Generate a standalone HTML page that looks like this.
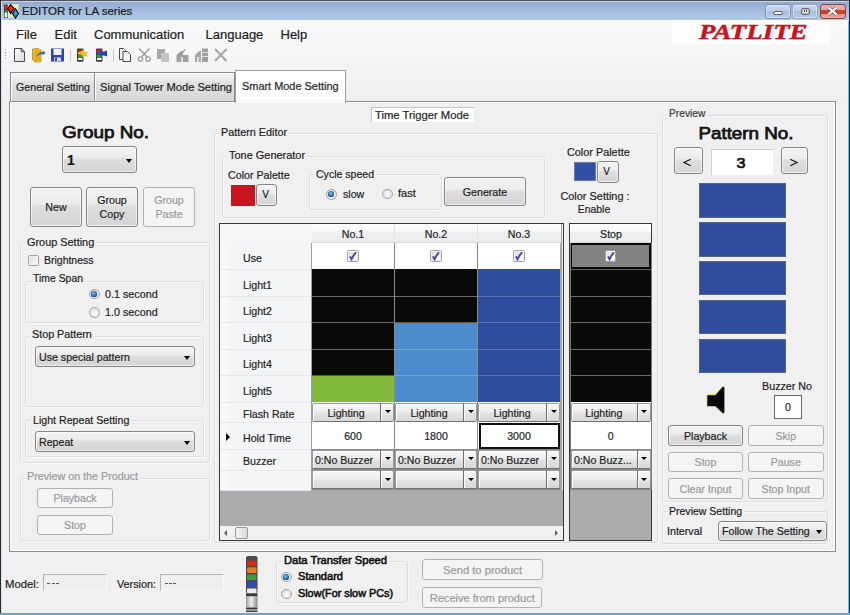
<!DOCTYPE html>
<html><head><meta charset="utf-8"><style>
html,body{margin:0;padding:0;}
body{width:850px;height:615px;overflow:hidden;position:relative;font-family:"Liberation Sans", sans-serif;background:#f0f0f0;}
body>div,body>svg{position:absolute;}
body>div{-webkit-text-stroke:0.2px currentColor;}
</style></head><body>
<div style="left:0px;top:0px;width:850px;height:615px;background:#f0f0f0;"></div>
<div style="left:0px;top:0px;width:850px;height:20px;background:linear-gradient(#8ea6cb,#a6bfdf 60%,#b0c9e8);"></div>
<div style="left:0px;top:0px;width:850px;height:1px;background:#4a5260;"></div>
<div style="left:0px;top:0px;width:1px;height:615px;background:#2a2a2a;"></div>
<div style="left:1px;top:1px;width:1px;height:614px;background:#d6e2ee;"></div>
<div style="left:1px;top:1px;width:848px;height:1px;background:#c8d6e8;"></div>
<div style="left:849px;top:0px;width:1px;height:615px;background:#1b2a4e;"></div>
<div style="left:848px;top:21px;width:1px;height:594px;background:#5cc3ea;"></div>
<div style="left:0px;top:613px;width:850px;height:2px;background:#3db6df;"></div>
<svg style="left:4px;top:4px" width="15" height="15" viewBox="0 0 15 15"><defs><linearGradient id="ibg" x1="0" y1="0" x2="1" y2="1"><stop offset="0" stop-color="#b8d8a8"/><stop offset="0.5" stop-color="#e8f0c8"/><stop offset="1" stop-color="#a8d8c8"/></linearGradient></defs><rect x="0" y="0" width="14.5" height="14" fill="url(#ibg)"/><rect x="0" y="0.5" width="3.8" height="13.5" fill="#3a3a3a"/><rect x="0.6" y="1.5" width="2.6" height="3.5" fill="#e82818"/><rect x="0.6" y="5.8" width="2.6" height="1.8" fill="#18a040"/><rect x="0.6" y="8.2" width="2.6" height="5.2" rx="1" fill="#f4f4f4"/><path d="M6.6 0.5 L10 4.5 L6.6 9.5 L3.8 4.5 Z" fill="#f02818" stroke="#000" stroke-width="1.1"/><path d="M11.5 4.8 L14.5 9.5 L11.5 14 L8.5 9.5 Z" fill="#2898e8" stroke="#000" stroke-width="1.1"/></svg>
<div style="left:22px;top:5.77px;font-size:11.5px;line-height:11.5px;font-weight:400;color:#1a1a1a;white-space:nowrap;">EDITOR for LA series</div>
<div style="left:765px;top:4px;width:26px;height:14.5px;border:1px solid #7c8fae;border-radius:3px;box-sizing:border-box;background:linear-gradient(#c9d8ec,#bccde6 45%,#a9bedc 50%,#b6cbe6);box-shadow:inset 0 0 0 1px rgba(255,255,255,0.45);"></div>
<div style="left:773px;top:11px;width:9.5px;height:4px;background:#f8f8f8;border:1px solid #5c6470;border-radius:2px;box-sizing:border-box;"></div>
<div style="left:792px;top:4px;width:26px;height:14.5px;border:1px solid #7c8fae;border-radius:3px;box-sizing:border-box;background:linear-gradient(#c9d8ec,#bccde6 45%,#a9bedc 50%,#b6cbe6);box-shadow:inset 0 0 0 1px rgba(255,255,255,0.45);border-color:#96a8c4;"></div>
<div style="left:801px;top:7.5px;width:9px;height:7.5px;background:#e8e8e8;border:1px solid #6a6a6a;border-radius:2px;box-sizing:border-box;box-shadow:inset 0 0 0 1px #b8b8b8;"></div>
<div style="left:803.5px;top:10px;width:1.2px;height:1.5px;background:#444;"></div>
<div style="left:806px;top:10px;width:1.2px;height:1.5px;background:#444;"></div>
<div style="left:820px;top:4px;width:26px;height:14.5px;border:1px solid #7e4a48;border-radius:3px;box-sizing:border-box;background:linear-gradient(#f2b2b0,#eda09c 40%,#c8482a 42%,#c44420 68%,#e89088 72%,#f0a8a4);"></div>
<svg style="left:826px;top:6px" width="13" height="10" viewBox="0 0 13 10"><path d="M2.5 1.5 L10.5 8.5 M10.5 1.5 L2.5 8.5" stroke="#6a5a5a" stroke-width="3.4"/><path d="M2.5 1.5 L10.5 8.5 M10.5 1.5 L2.5 8.5" stroke="#fff" stroke-width="2.2"/></svg>
<div style="left:2px;top:20px;width:846px;height:24px;background:linear-gradient(#fafafa,#f6f6f6);"></div>
<div style="left:16px;top:27.80px;font-size:13px;line-height:13px;font-weight:400;color:#1e1e1e;white-space:nowrap;">File</div>
<div style="left:54.5px;top:27.80px;font-size:13px;line-height:13px;font-weight:400;color:#1e1e1e;white-space:nowrap;">Edit</div>
<div style="left:94px;top:27.80px;font-size:13px;line-height:13px;font-weight:400;color:#1e1e1e;white-space:nowrap;">Communication</div>
<div style="left:205.5px;top:27.80px;font-size:13px;line-height:13px;font-weight:400;color:#1e1e1e;white-space:nowrap;">Language</div>
<div style="left:280.5px;top:27.80px;font-size:13px;line-height:13px;font-weight:400;color:#1e1e1e;white-space:nowrap;">Help</div>
<div style="left:672px;top:20px;width:158px;height:24px;background:#fdfdfd;"></div>
<div style="left:698.8px;top:22.00px;font-size:21.5px;line-height:21.5px;font-weight:700;color:#c8141e;white-space:nowrap;font-style:italic;-webkit-text-stroke:0.5px #c8141e;font-family:'Liberation Serif', serif;transform:scaleX(1.2500);transform-origin:left 0;">PATLITE</div>
<div style="left:2px;top:44px;width:846px;height:58px;background:linear-gradient(#f8f8f8,#f3f3f3 40%,#eeeeee);"></div>
<div style="left:5px;top:49px;width:1px;height:1px;background:#9a9a9a;"></div>
<div style="left:5px;top:52px;width:1px;height:1px;background:#9a9a9a;"></div>
<div style="left:5px;top:55px;width:1px;height:1px;background:#9a9a9a;"></div>
<div style="left:5px;top:58px;width:1px;height:1px;background:#9a9a9a;"></div>
<svg style="left:0;top:44px" width="240" height="22" viewBox="0 44 240 22"><path d="M14.5 48.5 H21.2 L24.5 51.8 V61.5 H14.5 Z" fill="url(#gpage)" stroke="#4a4a4a" stroke-width="1"/><path d="M21.2 48.5 V51.8 H24.5 Z" fill="#d0d0d0" stroke="#4a4a4a" stroke-width="0.9"/><path d="M32.5 49 L38 48.5 L41 50 V61.5 L35 62 L32.5 60 Z" fill="#f0c030" stroke="#b08a20" stroke-width="0.8"/><path d="M34.5 50 L40 51 V60 L34.5 61 Z" fill="#e2a820"/><path d="M37 56.5 Q38.5 51.5 43 52 L42.5 50 L45.5 53 L42.5 55.5 L42.8 53.8 Q39.5 53.5 37 56.5 Z" fill="#3a5ab8"/><rect x="51" y="48.5" width="13" height="13" fill="#3344aa"/><rect x="53.5" y="49" width="8" height="6" fill="#f2f2f2"/><rect x="54" y="57.5" width="7" height="3.5" fill="#dde"/><rect x="55" y="58" width="2" height="3" fill="#3344aa"/><rect x="70" y="49.5" width="1" height="12" fill="#c8c8c8"/><rect x="77" y="48.5" width="6.5" height="13.2" rx="1" fill="#404040"/><rect x="78" y="50" width="4.5" height="2" fill="#e02020"/><rect x="78" y="52" width="4.5" height="2.5" fill="#e8c020"/><rect x="78" y="54.5" width="4.5" height="3" fill="#30a030"/><rect x="78" y="58" width="4.5" height="2" fill="#f0f0f0"/><path d="M80 52 L83 50 L85 52 L88 51.5 L86.5 54.5 L88 57 L85 56 L83 58 L82 55 L79.5 54 Z" fill="#f2c21a"/><rect x="96" y="48.5" width="6.5" height="13.2" rx="1" fill="#404040"/><rect x="97" y="50" width="4.5" height="2" fill="#e02020"/><rect x="97" y="52" width="4.5" height="2.5" fill="#3050c0"/><rect x="97" y="54.5" width="4.5" height="3" fill="#30a030"/><rect x="97" y="58" width="4.5" height="2" fill="#f0f0f0"/><path d="M99.5 51.5 H104 L107 50.5 V56.5 L104 55.5 H99.5 Z" fill="#2040c0"/><rect x="113" y="49.5" width="1" height="12" fill="#c8c8c8"/><path d="M119.5 48.5 H123.5 L125.5 50.5 V59.5 H119.5 Z" fill="#f4f4f4" stroke="#4a4a4a" stroke-width="1"/><path d="M123 51.5 H127.5 L130.5 54.5 V61.5 H123 Z" fill="#f4f4f4" stroke="#4a4a4a" stroke-width="1"/><path d="M139 48.5 L147 57 M149.5 48.5 L141.5 57" stroke="#a0a0a0" stroke-width="1.6"/><circle cx="140.5" cy="59" r="2.2" fill="none" stroke="#a0a0a0" stroke-width="1.3"/><circle cx="148" cy="59" r="2.2" fill="none" stroke="#a0a0a0" stroke-width="1.3"/><rect x="157" y="49" width="8" height="10" fill="#a8a8a8"/><rect x="161" y="53" width="8" height="9" fill="#c4c4c4"/><path d="M176.5 55 L181 51 L183.5 51 L183.5 49.5 L186 49.5 L183 53 V62 H176.5 Z" fill="#a0a0a0"/><rect x="183" y="55" width="5.5" height="7" fill="#a0a0a0"/><rect x="181" y="57" width="2" height="5" fill="#e0e0e0"/><path d="M195 55 L199 51 H201 V62 H195 Z" fill="#a8a8a8"/><rect x="202" y="48.5" width="6" height="13.5" fill="#a0a0a0"/><rect x="202" y="52" width="6" height="1" fill="#e0e0e0"/><rect x="202" y="56" width="6" height="1" fill="#e0e0e0"/><rect x="197" y="57" width="2" height="5" fill="#e0e0e0"/><path d="M215 49 L226.5 61 M226.5 49 L215 61" stroke="#a8a8a8" stroke-width="2.2"/><defs><linearGradient id="gpage" x1="0" y1="0" x2="1" y2="1"><stop offset="0" stop-color="#fff"/><stop offset="1" stop-color="#d8d8d8"/></linearGradient></defs></svg>
<div style="left:10px;top:72px;width:85px;height:30px;border:1px solid #8a8a8a;border-bottom:none;box-sizing:border-box;background:linear-gradient(#f2f2f2 0%,#ebebeb 26%,#e2e2e2 28%,#d8d8d8 100%);box-shadow:inset 1px 1px 0 #fff;"></div>
<div style="left:15.8px;top:82.49px;font-size:11px;line-height:11px;font-weight:400;color:#1e1e1e;white-space:nowrap;transform:scaleX(0.9682);transform-origin:left 0;">General Setting</div>
<div style="left:94px;top:72px;width:141px;height:30px;border:1px solid #8a8a8a;border-bottom:none;box-sizing:border-box;background:linear-gradient(#f2f2f2 0%,#ebebeb 26%,#e2e2e2 28%,#d8d8d8 100%);box-shadow:inset 1px 1px 0 #fff;"></div>
<div style="left:99.5px;top:82.49px;font-size:11px;line-height:11px;font-weight:400;color:#1e1e1e;white-space:nowrap;transform:scaleX(1.0104);transform-origin:left 0;">Signal Tower Mode Setting</div>
<div style="left:9px;top:101px;width:827px;height:451px;border:1px solid #898c95;box-sizing:border-box;background:#f0f0f0;box-shadow:inset 1px 1px 0 #fff, inset -1px -1px 0 #fff;"></div>
<div style="left:235px;top:70px;width:111px;height:33px;border:1px solid #9a9ca2;border-bottom:none;box-sizing:border-box;background:#fff;"></div>
<div style="left:236px;top:100px;width:109px;height:2.5px;background:#fbfbfb;"></div>
<div style="left:241.8px;top:80.89px;font-size:11px;line-height:11px;font-weight:400;color:#1e1e1e;white-space:nowrap;transform:scaleX(0.9937);transform-origin:left 0;">Smart Mode Setting</div>
<div style="left:62px;top:124.55px;font-size:16.6px;line-height:16.6px;font-weight:400;color:#141414;white-space:nowrap;-webkit-text-stroke:0.75px #141414;transform:scaleX(1.1360);transform-origin:left 0;">Group No.</div>
<div style="left:62px;top:146px;width:75px;height:27px;border:1px solid #858585;border-radius:3px;background:linear-gradient(#f3f3f3 0%,#ececec 42%,#dedede 48%,#d4d4d4 100%);box-sizing:border-box;box-shadow:inset 0 0 0 1px rgba(255,255,255,0.6);"></div>
<div style="left:66px;top:154.81px;font-size:11px;line-height:11px;font-weight:400;color:#1e1e1e;white-space:nowrap;transform:scaleX(0.9650);transform-origin:left 0;"></div>
<div style="left:126px;top:158.5px;width:0;height:0;border-left:3.5px solid transparent;border-right:3.5px solid transparent;border-top:4px solid #000;"></div>
<div style="left:67px;top:153.15px;font-size:14px;line-height:14px;font-weight:700;color:#141414;white-space:nowrap;">1</div>
<div style="left:29.7px;top:187px;width:52px;height:40px;border:1px solid #858585;border-radius:3px;background:linear-gradient(#f3f3f3 0%,#ececec 42%,#dedede 48%,#d4d4d4 100%);box-sizing:border-box;box-shadow:inset 0 0 0 1px rgba(255,255,255,0.6);"></div>
<div style="left:29.70px;width:52px;text-align:center;top:202.31px;font-size:11px;line-height:11px;font-weight:400;color:#1e1e1e;white-space:nowrap;transform:scaleX(0.9650);transform-origin:center 0;">New</div>
<div style="left:86px;top:187px;width:52px;height:40px;border:1px solid #858585;border-radius:3px;background:linear-gradient(#f3f3f3 0%,#ececec 42%,#dedede 48%,#d4d4d4 100%);box-sizing:border-box;box-shadow:inset 0 0 0 1px rgba(255,255,255,0.6);"></div>
<div style="left:86.00px;width:52px;text-align:center;top:195.19px;font-size:11px;line-height:11px;font-weight:400;color:#1e1e1e;white-space:nowrap;transform:scaleX(0.9650);transform-origin:center 0;">Group</div>
<div style="left:86.00px;width:52px;text-align:center;top:209.19px;font-size:11px;line-height:11px;font-weight:400;color:#1e1e1e;white-space:nowrap;transform:scaleX(0.9650);transform-origin:center 0;">Copy</div>
<div style="left:143px;top:187px;width:52px;height:40px;border:1px solid #adb2b5;border-radius:3px;background:#f4f4f4;box-sizing:border-box;"></div>
<div style="left:143.00px;width:52px;text-align:center;top:195.19px;font-size:11px;line-height:11px;font-weight:400;color:#9a9a9a;white-space:nowrap;transform:scaleX(0.9650);transform-origin:center 0;">Group</div>
<div style="left:143.00px;width:52px;text-align:center;top:209.19px;font-size:11px;line-height:11px;font-weight:400;color:#9a9a9a;white-space:nowrap;transform:scaleX(0.9650);transform-origin:center 0;">Paste</div>
<div style="left:20px;top:242px;width:190px;height:221px;border:1px solid #dcdcdc;border-radius:3px;box-sizing:border-box;box-shadow:inset 1px 1px 0 #fafafa, 1px 1px 0 #fafafa;"></div>
<div style="left:25px;top:240px;width:71.2px;height:5px;background:#f0f0f0;"></div>
<div style="left:27px;top:236.69px;font-size:11px;line-height:11px;font-weight:400;color:#1e1e1e;white-space:nowrap;transform:scaleX(0.9901);transform-origin:left 0;">Group Setting</div>
<div style="left:27.8px;top:255.2px;width:11.3px;height:11.3px;border:1px solid #a2a2a2;border-radius:1.5px;box-sizing:border-box;background:linear-gradient(135deg,#d6d6d6,#f6f6f6 70%,#fcfcfc);box-shadow:inset 0 0 0 1px #f0f0f0;"></div>
<div style="left:44px;top:255.29px;font-size:11px;line-height:11px;font-weight:400;color:#1e1e1e;white-space:nowrap;transform:scaleX(0.9525);transform-origin:left 0;">Brightness</div>
<div style="left:25px;top:281px;width:179px;height:42px;border:1px solid #dcdcdc;border-radius:3px;box-sizing:border-box;box-shadow:inset 1px 1px 0 #fafafa, 1px 1px 0 #fafafa;"></div>
<div style="left:30.700000000000003px;top:279px;width:54px;height:5px;background:#f0f0f0;"></div>
<div style="left:32.7px;top:273.29px;font-size:11px;line-height:11px;font-weight:400;color:#1e1e1e;white-space:nowrap;transform:scaleX(0.9473);transform-origin:left 0;">Time Span</div>
<div style="left:89px;top:288.6px;width:10.5px;height:10.5px;border-radius:50%;border:1px solid #a4a4a4;box-sizing:border-box;background:radial-gradient(circle at 55% 60%, #fcfcfc, #d8d8d8 90%);"></div>
<div style="left:91.4px;top:291.0px;width:5.7px;height:5.7px;border-radius:50%;background:radial-gradient(circle at 45% 40%, #9fd4f4 0%, #3a86c4 35%, #123e78 85%);"></div>
<div style="left:105px;top:288.69px;font-size:11px;line-height:11px;font-weight:400;color:#1e1e1e;white-space:nowrap;transform:scaleX(0.9793);transform-origin:left 0;">0.1 second</div>
<div style="left:89px;top:307px;width:10.5px;height:10.5px;border-radius:50%;border:1px solid #a4a4a4;box-sizing:border-box;background:radial-gradient(circle at 55% 60%, #fcfcfc, #d8d8d8 90%);"></div>
<div style="left:105px;top:306.69px;font-size:11px;line-height:11px;font-weight:400;color:#1e1e1e;white-space:nowrap;transform:scaleX(0.9793);transform-origin:left 0;">1.0 second</div>
<div style="left:24.5px;top:336px;width:179.5px;height:70.5px;border:1px solid #dcdcdc;border-radius:3px;box-sizing:border-box;box-shadow:inset 1px 1px 0 #fafafa, 1px 1px 0 #fafafa;"></div>
<div style="left:30.200000000000003px;top:334px;width:63.8px;height:5px;background:#f0f0f0;"></div>
<div style="left:32.2px;top:329.39px;font-size:11px;line-height:11px;font-weight:400;color:#1e1e1e;white-space:nowrap;transform:scaleX(0.9779);transform-origin:left 0;">Stop Pattern</div>
<div style="left:35px;top:346px;width:160px;height:21px;border:1px solid #858585;border-radius:3px;background:linear-gradient(#f3f3f3 0%,#ececec 42%,#dedede 48%,#d4d4d4 100%);box-sizing:border-box;box-shadow:inset 0 0 0 1px rgba(255,255,255,0.6);"></div>
<div style="left:39px;top:351.81px;font-size:11px;line-height:11px;font-weight:400;color:#1e1e1e;white-space:nowrap;transform:scaleX(0.9650);transform-origin:left 0;">Use special pattern</div>
<div style="left:184px;top:355.5px;width:0;height:0;border-left:3.5px solid transparent;border-right:3.5px solid transparent;border-top:4px solid #000;"></div>
<div style="left:25px;top:420px;width:179px;height:37px;border:1px solid #dcdcdc;border-radius:3px;box-sizing:border-box;box-shadow:inset 1px 1px 0 #fafafa, 1px 1px 0 #fafafa;"></div>
<div style="left:30.9px;top:418px;width:100.3px;height:5px;background:#f0f0f0;"></div>
<div style="left:32.9px;top:414.69px;font-size:11px;line-height:11px;font-weight:400;color:#1e1e1e;white-space:nowrap;transform:scaleX(0.9661);transform-origin:left 0;">Light Repeat Setting</div>
<div style="left:35px;top:431px;width:160px;height:21px;border:1px solid #858585;border-radius:3px;background:linear-gradient(#f3f3f3 0%,#ececec 42%,#dedede 48%,#d4d4d4 100%);box-sizing:border-box;box-shadow:inset 0 0 0 1px rgba(255,255,255,0.6);"></div>
<div style="left:39px;top:436.81px;font-size:11px;line-height:11px;font-weight:400;color:#1e1e1e;white-space:nowrap;transform:scaleX(0.9650);transform-origin:left 0;">Repeat</div>
<div style="left:184px;top:440.5px;width:0;height:0;border-left:3.5px solid transparent;border-right:3.5px solid transparent;border-top:4px solid #000;"></div>
<div style="left:20px;top:478px;width:190px;height:63px;border:1px solid #dcdcdc;border-radius:3px;box-sizing:border-box;box-shadow:inset 1px 1px 0 #fafafa, 1px 1px 0 #fafafa;"></div>
<div style="left:25px;top:476px;width:115px;height:5px;background:#f0f0f0;"></div>
<div style="left:27px;top:471.39px;font-size:11px;line-height:11px;font-weight:400;color:#9a9a9a;white-space:nowrap;transform:scaleX(0.9761);transform-origin:left 0;">Preview on the Product</div>
<div style="left:37px;top:488px;width:76px;height:20px;border:1px solid #adb2b5;border-radius:3px;background:#f4f4f4;box-sizing:border-box;"></div>
<div style="left:37.00px;width:76px;text-align:center;top:493.31px;font-size:11px;line-height:11px;font-weight:400;color:#9a9a9a;white-space:nowrap;transform:scaleX(0.9650);transform-origin:center 0;">Playback</div>
<div style="left:37px;top:514.5px;width:76px;height:20px;border:1px solid #adb2b5;border-radius:3px;background:#f4f4f4;box-sizing:border-box;"></div>
<div style="left:37.00px;width:76px;text-align:center;top:519.81px;font-size:11px;line-height:11px;font-weight:400;color:#9a9a9a;white-space:nowrap;transform:scaleX(0.9650);transform-origin:center 0;">Stop</div>
<div style="left:214px;top:133px;width:444px;height:410px;border:1px solid #dcdcdc;border-radius:3px;box-sizing:border-box;box-shadow:inset 1px 1px 0 #fafafa, 1px 1px 0 #fafafa;"></div>
<div style="left:219px;top:131px;width:70.1px;height:5px;background:#f0f0f0;"></div>
<div style="left:221px;top:126.69px;font-size:11px;line-height:11px;font-weight:400;color:#1e1e1e;white-space:nowrap;transform:scaleX(0.9828);transform-origin:left 0;">Pattern Editor</div>
<div style="left:371px;top:107px;width:103px;height:15px;background:#fff;border-top:1px solid #c4c4c4;border-left:1px solid #c4c4c4;box-sizing:border-box;"></div>
<div style="left:374.6px;top:110.09px;font-size:11px;line-height:11px;font-weight:400;color:#1e1e1e;white-space:nowrap;transform:scaleX(1.0229);transform-origin:left 0;">Time Trigger Mode</div>
<div style="left:222px;top:155.5px;width:323px;height:62px;border:1px solid #dcdcdc;border-radius:3px;box-sizing:border-box;box-shadow:inset 1px 1px 0 #fafafa, 1px 1px 0 #fafafa;"></div>
<div style="left:227.3px;top:153.5px;width:80.1px;height:5px;background:#f0f0f0;"></div>
<div style="left:229.3px;top:149.89px;font-size:11px;line-height:11px;font-weight:400;color:#1e1e1e;white-space:nowrap;transform:scaleX(0.9957);transform-origin:left 0;">Tone Generator</div>
<div style="left:227.8px;top:169.99px;font-size:11px;line-height:11px;font-weight:400;color:#1e1e1e;white-space:nowrap;transform:scaleX(0.9703);transform-origin:left 0;">Color Palette</div>
<div style="left:231px;top:184.5px;width:24px;height:21px;background:#c8141e;"></div>
<div style="left:256px;top:183.5px;width:21px;height:22.5px;border:1px solid #858585;border-radius:3px;background:linear-gradient(#f3f3f3 0%,#ececec 42%,#dedede 48%,#d4d4d4 100%);box-sizing:border-box;box-shadow:inset 0 0 0 1px rgba(255,255,255,0.6);"></div>
<div style="left:255.00px;width:21px;text-align:center;top:190.48px;font-size:10px;line-height:10px;font-weight:400;color:#1e1e1e;white-space:nowrap;">V</div>
<div style="left:309px;top:174px;width:133px;height:36px;border:1px solid #dcdcdc;border-radius:3px;box-sizing:border-box;box-shadow:inset 1px 1px 0 #fafafa, 1px 1px 0 #fafafa;"></div>
<div style="left:314px;top:172px;width:62px;height:5px;background:#f0f0f0;"></div>
<div style="left:316px;top:169.49px;font-size:11px;line-height:11px;font-weight:400;color:#1e1e1e;white-space:nowrap;transform:scaleX(0.9582);transform-origin:left 0;">Cycle speed</div>
<div style="left:326px;top:189px;width:10.5px;height:10.5px;border-radius:50%;border:1px solid #a4a4a4;box-sizing:border-box;background:radial-gradient(circle at 55% 60%, #fcfcfc, #d8d8d8 90%);"></div>
<div style="left:328.4px;top:191.4px;width:5.7px;height:5.7px;border-radius:50%;background:radial-gradient(circle at 45% 40%, #9fd4f4 0%, #3a86c4 35%, #123e78 85%);"></div>
<div style="left:342.8px;top:188.59px;font-size:11px;line-height:11px;font-weight:400;color:#1e1e1e;white-space:nowrap;transform:scaleX(0.9634);transform-origin:left 0;">slow</div>
<div style="left:382.4px;top:188.5px;width:10.5px;height:10.5px;border-radius:50%;border:1px solid #a4a4a4;box-sizing:border-box;background:radial-gradient(circle at 55% 60%, #fcfcfc, #d8d8d8 90%);"></div>
<div style="left:398px;top:187.89px;font-size:11px;line-height:11px;font-weight:400;color:#1e1e1e;white-space:nowrap;transform:scaleX(1.0040);transform-origin:left 0;">fast</div>
<div style="left:444px;top:177px;width:82px;height:29px;border:1px solid #858585;border-radius:3px;background:linear-gradient(#f3f3f3 0%,#ececec 42%,#dedede 48%,#d4d4d4 100%);box-sizing:border-box;box-shadow:inset 0 0 0 1px rgba(255,255,255,0.6);"></div>
<div style="left:444.00px;width:82px;text-align:center;top:186.81px;font-size:11px;line-height:11px;font-weight:400;color:#1e1e1e;white-space:nowrap;transform:scaleX(0.9650);transform-origin:center 0;">Generate</div>
<div style="left:567.3px;top:146.89px;font-size:11px;line-height:11px;font-weight:400;color:#1e1e1e;white-space:nowrap;transform:scaleX(0.9861);transform-origin:left 0;">Color Palette</div>
<div style="left:573.5px;top:162px;width:22px;height:18.5px;background:#3050a4;border:1px solid #6a7aa8;box-sizing:border-box;"></div>
<div style="left:597px;top:160.5px;width:22px;height:22px;border:1px solid #858585;border-radius:3px;background:linear-gradient(#f3f3f3 0%,#ececec 42%,#dedede 48%,#d4d4d4 100%);box-sizing:border-box;box-shadow:inset 0 0 0 1px rgba(255,255,255,0.6);"></div>
<div style="left:595.50px;width:22px;text-align:center;top:167.23px;font-size:10px;line-height:10px;font-weight:400;color:#1e1e1e;white-space:nowrap;">V</div>
<div style="left:494.60px;width:200px;text-align:center;top:190.89px;font-size:11px;line-height:11px;font-weight:400;color:#1e1e1e;white-space:nowrap;transform:scaleX(0.9928);transform-origin:center 0;">Color Setting :</div>
<div style="left:494.40px;width:200px;text-align:center;top:204.49px;font-size:11px;line-height:11px;font-weight:400;color:#1e1e1e;white-space:nowrap;transform:scaleX(0.9460);transform-origin:center 0;">Enable</div>
<div style="left:219px;top:223px;width:345px;height:318px;background:#ababab;border:1px solid #383838;box-sizing:border-box;"></div>
<div style="left:220px;top:224px;width:343px;height:19px;background:linear-gradient(#fdfdfd 0%,#f9f9fa 36%,#eeeff0 42%,#ebebec 100%);"></div>
<div style="left:220px;top:224px;width:92px;height:19px;background:#f7f7f8;"></div>
<div style="left:220px;top:243px;width:92px;height:247px;background:#f4f5f7;"></div>
<div style="left:220px;top:243px;width:10px;height:247px;background:#f7f8fa;"></div>
<div style="left:220px;top:268.5px;width:91px;height:1px;background:#e6e7ea;"></div>
<div style="left:220px;top:295.5px;width:91px;height:1px;background:#e6e7ea;"></div>
<div style="left:220px;top:321.5px;width:91px;height:1px;background:#e6e7ea;"></div>
<div style="left:220px;top:348.5px;width:91px;height:1px;background:#e6e7ea;"></div>
<div style="left:220px;top:374.5px;width:91px;height:1px;background:#e6e7ea;"></div>
<div style="left:220px;top:401.5px;width:91px;height:1px;background:#e6e7ea;"></div>
<div style="left:220px;top:422.0px;width:91px;height:1px;background:#e6e7ea;"></div>
<div style="left:220px;top:448.5px;width:91px;height:1px;background:#e6e7ea;"></div>
<div style="left:220px;top:470.0px;width:91px;height:1px;background:#e6e7ea;"></div>
<div style="left:220px;top:489.5px;width:91px;height:1px;background:#e6e7ea;"></div>
<div style="left:313.00px;width:80px;text-align:center;top:228.79px;font-size:11px;line-height:11px;font-weight:400;color:#1e1e1e;white-space:nowrap;transform:scaleX(0.9650);transform-origin:center 0;">No.1</div>
<div style="left:396.00px;width:80px;text-align:center;top:228.79px;font-size:11px;line-height:11px;font-weight:400;color:#1e1e1e;white-space:nowrap;transform:scaleX(0.9650);transform-origin:center 0;">No.2</div>
<div style="left:479.00px;width:80px;text-align:center;top:228.79px;font-size:11px;line-height:11px;font-weight:400;color:#1e1e1e;white-space:nowrap;transform:scaleX(0.9650);transform-origin:center 0;">No.3</div>
<div style="left:394.0px;top:224px;width:1px;height:19px;background:#e2e3e6;"></div>
<div style="left:477.0px;top:224px;width:1px;height:19px;background:#e2e3e6;"></div>
<div style="left:312px;top:241.5px;width:249px;height:1.5px;background:#d8d9dc;"></div>
<div style="left:243.3px;top:253.49px;font-size:11px;line-height:11px;font-weight:400;color:#1e1e1e;white-space:nowrap;transform:scaleX(0.9650);transform-origin:left 0;">Use</div>
<div style="left:243.3px;top:279.69px;font-size:11px;line-height:11px;font-weight:400;color:#1e1e1e;white-space:nowrap;transform:scaleX(0.9650);transform-origin:left 0;">Light1</div>
<div style="left:243.3px;top:306.49px;font-size:11px;line-height:11px;font-weight:400;color:#1e1e1e;white-space:nowrap;transform:scaleX(0.9650);transform-origin:left 0;">Light2</div>
<div style="left:243.3px;top:332.89px;font-size:11px;line-height:11px;font-weight:400;color:#1e1e1e;white-space:nowrap;transform:scaleX(0.9650);transform-origin:left 0;">Light3</div>
<div style="left:243.3px;top:359.49px;font-size:11px;line-height:11px;font-weight:400;color:#1e1e1e;white-space:nowrap;transform:scaleX(0.9650);transform-origin:left 0;">Light4</div>
<div style="left:243.3px;top:385.89px;font-size:11px;line-height:11px;font-weight:400;color:#1e1e1e;white-space:nowrap;transform:scaleX(0.9650);transform-origin:left 0;">Light5</div>
<div style="left:243.3px;top:408.99px;font-size:11px;line-height:11px;font-weight:400;color:#1e1e1e;white-space:nowrap;transform:scaleX(0.9650);transform-origin:left 0;">Flash Rate</div>
<div style="left:243.3px;top:432.89px;font-size:11px;line-height:11px;font-weight:400;color:#1e1e1e;white-space:nowrap;transform:scaleX(0.9650);transform-origin:left 0;">Hold Time</div>
<div style="left:243.3px;top:455.89px;font-size:11px;line-height:11px;font-weight:400;color:#1e1e1e;white-space:nowrap;transform:scaleX(0.9650);transform-origin:left 0;">Buzzer</div>
<div style="left:225.5px;top:433px;width:0;height:0;border-top:4px solid transparent;border-bottom:4px solid transparent;border-left:4.5px solid #000;"></div>
<div style="left:312.0px;top:243px;width:82.0px;height:26px;background:#fff;"></div>
<div style="left:312.0px;top:269px;width:82.0px;height:27px;background:#0a0a0a;"></div>
<div style="left:312.0px;top:296px;width:82.0px;height:26px;background:#0a0a0a;"></div>
<div style="left:312.0px;top:322px;width:82.0px;height:27px;background:#0a0a0a;"></div>
<div style="left:312.0px;top:349px;width:82.0px;height:26px;background:#0a0a0a;"></div>
<div style="left:312.0px;top:375px;width:82.0px;height:27px;background:#82b83c;"></div>
<div style="left:312.0px;top:295.5px;width:82.0px;height:1px;background:#6a6a6a;"></div>
<div style="left:312.0px;top:321.5px;width:82.0px;height:1px;background:#6a6a6a;"></div>
<div style="left:312.0px;top:348.5px;width:82.0px;height:1px;background:#6a6a6a;"></div>
<div style="left:312.0px;top:374.5px;width:82.0px;height:1px;background:#5a5a5a;"></div>
<div style="left:312.0px;top:402px;width:82.0px;height:88px;background:#fff;"></div>
<div style="left:312.0px;top:449px;width:82.0px;height:41px;background:#8a8a8a;"></div>
<div style="left:312.0px;top:402.5px;width:82.0px;height:19.5px;background:linear-gradient(#f6f6f6 0%,#eeeeee 45%,#e2e2e2 55%,#d8d8d8 100%);border:1px solid #9a9a9a;border-bottom:1.5px solid #727272;border-radius:2px;box-sizing:border-box;box-shadow:inset 1px 1px 0 #fff;"></div>
<div style="left:380.0px;top:402.5px;width:1.2px;height:19.5px;background:#6e6e6e;"></div>
<div style="left:381.2px;top:403.5px;width:1px;height:17.0px;background:#fafafa;"></div>
<div style="left:384.5px;top:410.05px;width:0;height:0;border-left:3.2px solid transparent;border-right:3.2px solid transparent;border-top:3.8px solid #000;"></div>
<div style="left:312.00px;width:68.0px;text-align:center;top:407.89px;font-size:11px;line-height:11px;font-weight:400;color:#1e1e1e;white-space:nowrap;transform:scaleX(0.9650);transform-origin:center 0;">Lighting</div>
<div style="left:312.0px;top:449.5px;width:82.0px;height:19.5px;background:linear-gradient(#f6f6f6 0%,#eeeeee 45%,#e2e2e2 55%,#d8d8d8 100%);border:1px solid #9a9a9a;border-bottom:1.5px solid #727272;border-radius:2px;box-sizing:border-box;box-shadow:inset 1px 1px 0 #fff;"></div>
<div style="left:380.0px;top:449.5px;width:1.2px;height:19.5px;background:#6e6e6e;"></div>
<div style="left:381.2px;top:450.5px;width:1px;height:17.0px;background:#fafafa;"></div>
<div style="left:384.5px;top:457.05px;width:0;height:0;border-left:3.2px solid transparent;border-right:3.2px solid transparent;border-top:3.8px solid #000;"></div>
<div style="left:314.5px;top:454.69px;font-size:11px;line-height:11px;font-weight:400;color:#1e1e1e;white-space:nowrap;transform:scaleX(0.9583);transform-origin:left 0;">0:No Buzzer</div>
<div style="left:312.0px;top:470.3px;width:82.0px;height:19.0px;background:linear-gradient(#f6f6f6 0%,#eeeeee 45%,#e2e2e2 55%,#d8d8d8 100%);border:1px solid #9a9a9a;border-bottom:1.5px solid #727272;border-radius:2px;box-sizing:border-box;box-shadow:inset 1px 1px 0 #fff;"></div>
<div style="left:380.0px;top:470.3px;width:1.2px;height:19.0px;background:#6e6e6e;"></div>
<div style="left:381.2px;top:471.3px;width:1px;height:16.5px;background:#fafafa;"></div>
<div style="left:384.5px;top:477.6px;width:0;height:0;border-left:3.2px solid transparent;border-right:3.2px solid transparent;border-top:3.8px solid #000;"></div>
<div style="left:312.00px;width:82.0px;text-align:center;top:430.99px;font-size:11px;line-height:11px;font-weight:400;color:#1e1e1e;white-space:nowrap;transform:scaleX(0.9650);transform-origin:center 0;">600</div>
<div style="left:395.0px;top:243px;width:82.0px;height:26px;background:#fff;"></div>
<div style="left:395.0px;top:269px;width:82.0px;height:27px;background:#0a0a0a;"></div>
<div style="left:395.0px;top:296px;width:82.0px;height:26px;background:#0a0a0a;"></div>
<div style="left:395.0px;top:322px;width:82.0px;height:27px;background:#4a8ccc;"></div>
<div style="left:395.0px;top:349px;width:82.0px;height:26px;background:#4a8ccc;"></div>
<div style="left:395.0px;top:375px;width:82.0px;height:27px;background:#4a8ccc;"></div>
<div style="left:395.0px;top:295.5px;width:82.0px;height:1px;background:#6a6a6a;"></div>
<div style="left:395.0px;top:321.5px;width:82.0px;height:1px;background:#5a5a5a;"></div>
<div style="left:395.0px;top:348.5px;width:82.0px;height:1px;background:#62a8c8;"></div>
<div style="left:395.0px;top:374.5px;width:82.0px;height:1px;background:#62a8c8;"></div>
<div style="left:395.0px;top:402px;width:82.0px;height:88px;background:#fff;"></div>
<div style="left:395.0px;top:449px;width:82.0px;height:41px;background:#8a8a8a;"></div>
<div style="left:395.0px;top:402.5px;width:82.0px;height:19.5px;background:linear-gradient(#f6f6f6 0%,#eeeeee 45%,#e2e2e2 55%,#d8d8d8 100%);border:1px solid #9a9a9a;border-bottom:1.5px solid #727272;border-radius:2px;box-sizing:border-box;box-shadow:inset 1px 1px 0 #fff;"></div>
<div style="left:463.0px;top:402.5px;width:1.2px;height:19.5px;background:#6e6e6e;"></div>
<div style="left:464.2px;top:403.5px;width:1px;height:17.0px;background:#fafafa;"></div>
<div style="left:467.5px;top:410.05px;width:0;height:0;border-left:3.2px solid transparent;border-right:3.2px solid transparent;border-top:3.8px solid #000;"></div>
<div style="left:395.00px;width:68.0px;text-align:center;top:407.89px;font-size:11px;line-height:11px;font-weight:400;color:#1e1e1e;white-space:nowrap;transform:scaleX(0.9650);transform-origin:center 0;">Lighting</div>
<div style="left:395.0px;top:449.5px;width:82.0px;height:19.5px;background:linear-gradient(#f6f6f6 0%,#eeeeee 45%,#e2e2e2 55%,#d8d8d8 100%);border:1px solid #9a9a9a;border-bottom:1.5px solid #727272;border-radius:2px;box-sizing:border-box;box-shadow:inset 1px 1px 0 #fff;"></div>
<div style="left:463.0px;top:449.5px;width:1.2px;height:19.5px;background:#6e6e6e;"></div>
<div style="left:464.2px;top:450.5px;width:1px;height:17.0px;background:#fafafa;"></div>
<div style="left:467.5px;top:457.05px;width:0;height:0;border-left:3.2px solid transparent;border-right:3.2px solid transparent;border-top:3.8px solid #000;"></div>
<div style="left:397.5px;top:454.69px;font-size:11px;line-height:11px;font-weight:400;color:#1e1e1e;white-space:nowrap;transform:scaleX(0.9583);transform-origin:left 0;">0:No Buzzer</div>
<div style="left:395.0px;top:470.3px;width:82.0px;height:19.0px;background:linear-gradient(#f6f6f6 0%,#eeeeee 45%,#e2e2e2 55%,#d8d8d8 100%);border:1px solid #9a9a9a;border-bottom:1.5px solid #727272;border-radius:2px;box-sizing:border-box;box-shadow:inset 1px 1px 0 #fff;"></div>
<div style="left:463.0px;top:470.3px;width:1.2px;height:19.0px;background:#6e6e6e;"></div>
<div style="left:464.2px;top:471.3px;width:1px;height:16.5px;background:#fafafa;"></div>
<div style="left:467.5px;top:477.6px;width:0;height:0;border-left:3.2px solid transparent;border-right:3.2px solid transparent;border-top:3.8px solid #000;"></div>
<div style="left:395.00px;width:82.0px;text-align:center;top:430.99px;font-size:11px;line-height:11px;font-weight:400;color:#1e1e1e;white-space:nowrap;transform:scaleX(0.9650);transform-origin:center 0;">1800</div>
<div style="left:478.0px;top:243px;width:82.0px;height:26px;background:#fff;"></div>
<div style="left:478.0px;top:269px;width:82.0px;height:27px;background:#2f4d9e;"></div>
<div style="left:478.0px;top:296px;width:82.0px;height:26px;background:#2f4d9e;"></div>
<div style="left:478.0px;top:322px;width:82.0px;height:27px;background:#2f4d9e;"></div>
<div style="left:478.0px;top:349px;width:82.0px;height:26px;background:#2f4d9e;"></div>
<div style="left:478.0px;top:375px;width:82.0px;height:27px;background:#2f4d9e;"></div>
<div style="left:478.0px;top:295.5px;width:82.0px;height:1px;background:#5a72b4;"></div>
<div style="left:478.0px;top:321.5px;width:82.0px;height:1px;background:#5a72b4;"></div>
<div style="left:478.0px;top:348.5px;width:82.0px;height:1px;background:#5a72b4;"></div>
<div style="left:478.0px;top:374.5px;width:82.0px;height:1px;background:#5a72b4;"></div>
<div style="left:478.0px;top:402px;width:82.0px;height:88px;background:#fff;"></div>
<div style="left:478.0px;top:449px;width:82.0px;height:41px;background:#8a8a8a;"></div>
<div style="left:478.0px;top:402.5px;width:82.0px;height:19.5px;background:linear-gradient(#f6f6f6 0%,#eeeeee 45%,#e2e2e2 55%,#d8d8d8 100%);border:1px solid #9a9a9a;border-bottom:1.5px solid #727272;border-radius:2px;box-sizing:border-box;box-shadow:inset 1px 1px 0 #fff;"></div>
<div style="left:546.0px;top:402.5px;width:1.2px;height:19.5px;background:#6e6e6e;"></div>
<div style="left:547.2px;top:403.5px;width:1px;height:17.0px;background:#fafafa;"></div>
<div style="left:550.5px;top:410.05px;width:0;height:0;border-left:3.2px solid transparent;border-right:3.2px solid transparent;border-top:3.8px solid #000;"></div>
<div style="left:478.00px;width:68.0px;text-align:center;top:407.89px;font-size:11px;line-height:11px;font-weight:400;color:#1e1e1e;white-space:nowrap;transform:scaleX(0.9650);transform-origin:center 0;">Lighting</div>
<div style="left:478.0px;top:449.5px;width:82.0px;height:19.5px;background:linear-gradient(#f6f6f6 0%,#eeeeee 45%,#e2e2e2 55%,#d8d8d8 100%);border:1px solid #9a9a9a;border-bottom:1.5px solid #727272;border-radius:2px;box-sizing:border-box;box-shadow:inset 1px 1px 0 #fff;"></div>
<div style="left:546.0px;top:449.5px;width:1.2px;height:19.5px;background:#6e6e6e;"></div>
<div style="left:547.2px;top:450.5px;width:1px;height:17.0px;background:#fafafa;"></div>
<div style="left:550.5px;top:457.05px;width:0;height:0;border-left:3.2px solid transparent;border-right:3.2px solid transparent;border-top:3.8px solid #000;"></div>
<div style="left:480.5px;top:454.69px;font-size:11px;line-height:11px;font-weight:400;color:#1e1e1e;white-space:nowrap;transform:scaleX(0.9583);transform-origin:left 0;">0:No Buzzer</div>
<div style="left:478.0px;top:470.3px;width:82.0px;height:19.0px;background:linear-gradient(#f6f6f6 0%,#eeeeee 45%,#e2e2e2 55%,#d8d8d8 100%);border:1px solid #9a9a9a;border-bottom:1.5px solid #727272;border-radius:2px;box-sizing:border-box;box-shadow:inset 1px 1px 0 #fff;"></div>
<div style="left:546.0px;top:470.3px;width:1.2px;height:19.0px;background:#6e6e6e;"></div>
<div style="left:547.2px;top:471.3px;width:1px;height:16.5px;background:#fafafa;"></div>
<div style="left:550.5px;top:477.6px;width:0;height:0;border-left:3.2px solid transparent;border-right:3.2px solid transparent;border-top:3.8px solid #000;"></div>
<div style="left:478.00px;width:82.0px;text-align:center;top:430.99px;font-size:11px;line-height:11px;font-weight:400;color:#1e1e1e;white-space:nowrap;transform:scaleX(0.9650);transform-origin:center 0;">3000</div>
<div style="left:479.0px;top:423px;width:81.0px;height:26px;border:2px solid #111;box-sizing:border-box;"></div>
<div style="left:394.0px;top:243px;width:1px;height:247px;background:#8a8a8a;"></div>
<div style="left:477.0px;top:243px;width:1px;height:247px;background:#8a8a8a;"></div>
<div style="left:311px;top:243px;width:1px;height:247px;background:#a0a0a0;"></div>
<div style="left:560.5px;top:224px;width:1px;height:266px;background:#a0a0a0;"></div>
<div style="left:561.5px;top:224px;width:1.5px;height:266px;background:#f0f0f0;"></div>
<div style="left:347.0px;top:250.2px;width:11.5px;height:11.5px;border:1px solid #a2a2a2;border-radius:1.5px;box-sizing:border-box;background:linear-gradient(135deg,#d6d6d6,#f6f6f6 70%,#fcfcfc);box-shadow:inset 0 0 0 1px #f0f0f0;"></div>
<svg style="left:347.0px;top:250.2px" width="11.5" height="11.5" viewBox="0 0 11.5 11.5"><path d="M3.3 7 Q4 8.2 4.6 9.2 Q6.2 5.5 8.5 3" fill="none" stroke="#45489e" stroke-width="1.9" stroke-linecap="round"/></svg>
<div style="left:430.0px;top:250.2px;width:11.5px;height:11.5px;border:1px solid #a2a2a2;border-radius:1.5px;box-sizing:border-box;background:linear-gradient(135deg,#d6d6d6,#f6f6f6 70%,#fcfcfc);box-shadow:inset 0 0 0 1px #f0f0f0;"></div>
<svg style="left:430.0px;top:250.2px" width="11.5" height="11.5" viewBox="0 0 11.5 11.5"><path d="M3.3 7 Q4 8.2 4.6 9.2 Q6.2 5.5 8.5 3" fill="none" stroke="#45489e" stroke-width="1.9" stroke-linecap="round"/></svg>
<div style="left:513.0px;top:250.2px;width:11.5px;height:11.5px;border:1px solid #a2a2a2;border-radius:1.5px;box-sizing:border-box;background:linear-gradient(135deg,#d6d6d6,#f6f6f6 70%,#fcfcfc);box-shadow:inset 0 0 0 1px #f0f0f0;"></div>
<svg style="left:513.0px;top:250.2px" width="11.5" height="11.5" viewBox="0 0 11.5 11.5"><path d="M3.3 7 Q4 8.2 4.6 9.2 Q6.2 5.5 8.5 3" fill="none" stroke="#45489e" stroke-width="1.9" stroke-linecap="round"/></svg>
<div style="left:220px;top:525.5px;width:343px;height:14.5px;background:linear-gradient(#f2f2f2,#f0f0f0);box-sizing:border-box;"></div>
<div style="left:224px;top:530px;width:0;height:0;border-top:3px solid transparent;border-bottom:3px solid transparent;border-right:3px solid #606060;"></div>
<div style="left:555px;top:530px;width:0;height:0;border-top:3px solid transparent;border-bottom:3px solid transparent;border-left:3px solid #606060;"></div>
<div style="left:235px;top:527px;width:13px;height:12px;border:1px solid #9a9a9a;border-radius:2px;box-sizing:border-box;background:linear-gradient(90deg,#f4f4f4,#dcdcdc);"></div>
<div style="left:569px;top:223px;width:83px;height:318px;background:#ababab;border:1px solid #383838;box-sizing:border-box;"></div>
<div style="left:570px;top:224px;width:81px;height:19px;background:linear-gradient(#fdfdfd 0%,#f9f9fa 36%,#eeeff0 42%,#ebebec 100%);"></div>
<div style="left:570.50px;width:80px;text-align:center;top:228.79px;font-size:11px;line-height:11px;font-weight:400;color:#1e1e1e;white-space:nowrap;transform:scaleX(0.9650);transform-origin:center 0;">Stop</div>
<div style="left:570px;top:241.5px;width:81px;height:1.5px;background:#d8d9dc;"></div>
<div style="left:571px;top:243px;width:79.5px;height:26px;background:#fff;"></div>
<div style="left:571px;top:269px;width:79.5px;height:27px;background:#0a0a0a;"></div>
<div style="left:571px;top:296px;width:79.5px;height:26px;background:#0a0a0a;"></div>
<div style="left:571px;top:322px;width:79.5px;height:27px;background:#0a0a0a;"></div>
<div style="left:571px;top:349px;width:79.5px;height:26px;background:#0a0a0a;"></div>
<div style="left:571px;top:375px;width:79.5px;height:27px;background:#0a0a0a;"></div>
<div style="left:571px;top:295.5px;width:79.5px;height:1px;background:#6a6a6a;"></div>
<div style="left:571px;top:321.5px;width:79.5px;height:1px;background:#6a6a6a;"></div>
<div style="left:571px;top:348.5px;width:79.5px;height:1px;background:#6a6a6a;"></div>
<div style="left:571px;top:374.5px;width:79.5px;height:1px;background:#6a6a6a;"></div>
<div style="left:571px;top:402px;width:79.5px;height:88px;background:#fff;"></div>
<div style="left:571px;top:449px;width:79.5px;height:41px;background:#8a8a8a;"></div>
<div style="left:571px;top:402.5px;width:79.5px;height:19.5px;background:linear-gradient(#f6f6f6 0%,#eeeeee 45%,#e2e2e2 55%,#d8d8d8 100%);border:1px solid #9a9a9a;border-bottom:1.5px solid #727272;border-radius:2px;box-sizing:border-box;box-shadow:inset 1px 1px 0 #fff;"></div>
<div style="left:636.5px;top:402.5px;width:1.2px;height:19.5px;background:#6e6e6e;"></div>
<div style="left:637.7px;top:403.5px;width:1px;height:17.0px;background:#fafafa;"></div>
<div style="left:641.0px;top:410.05px;width:0;height:0;border-left:3.2px solid transparent;border-right:3.2px solid transparent;border-top:3.8px solid #000;"></div>
<div style="left:571.00px;width:65.5px;text-align:center;top:407.89px;font-size:11px;line-height:11px;font-weight:400;color:#1e1e1e;white-space:nowrap;transform:scaleX(0.9650);transform-origin:center 0;">Lighting</div>
<div style="left:571px;top:449.5px;width:79.5px;height:19.5px;background:linear-gradient(#f6f6f6 0%,#eeeeee 45%,#e2e2e2 55%,#d8d8d8 100%);border:1px solid #9a9a9a;border-bottom:1.5px solid #727272;border-radius:2px;box-sizing:border-box;box-shadow:inset 1px 1px 0 #fff;"></div>
<div style="left:636.5px;top:449.5px;width:1.2px;height:19.5px;background:#6e6e6e;"></div>
<div style="left:637.7px;top:450.5px;width:1px;height:17.0px;background:#fafafa;"></div>
<div style="left:641.0px;top:457.05px;width:0;height:0;border-left:3.2px solid transparent;border-right:3.2px solid transparent;border-top:3.8px solid #000;"></div>
<div style="left:573.5px;top:454.69px;font-size:11px;line-height:11px;font-weight:400;color:#1e1e1e;white-space:nowrap;transform:scaleX(0.9650);transform-origin:left 0;">0:No Buzz...</div>
<div style="left:571px;top:470.3px;width:79.5px;height:19.0px;background:linear-gradient(#f6f6f6 0%,#eeeeee 45%,#e2e2e2 55%,#d8d8d8 100%);border:1px solid #9a9a9a;border-bottom:1.5px solid #727272;border-radius:2px;box-sizing:border-box;box-shadow:inset 1px 1px 0 #fff;"></div>
<div style="left:636.5px;top:470.3px;width:1.2px;height:19.0px;background:#6e6e6e;"></div>
<div style="left:637.7px;top:471.3px;width:1px;height:16.5px;background:#fafafa;"></div>
<div style="left:641.0px;top:477.6px;width:0;height:0;border-left:3.2px solid transparent;border-right:3.2px solid transparent;border-top:3.8px solid #000;"></div>
<div style="left:571.00px;width:79.5px;text-align:center;top:430.99px;font-size:11px;line-height:11px;font-weight:400;color:#1e1e1e;white-space:nowrap;transform:scaleX(0.9650);transform-origin:center 0;">0</div>
<div style="left:570px;top:243px;width:81px;height:26px;background:#0a0a0a;"></div>
<div style="left:572px;top:245px;width:77px;height:22.3px;background:#828282;"></div>
<div style="left:570px;top:268.6px;width:81px;height:1px;background:#5e5e5e;"></div>
<div style="left:604.5px;top:250.2px;width:11.5px;height:11.5px;border:1px solid #a2a2a2;border-radius:1.5px;box-sizing:border-box;background:linear-gradient(135deg,#d6d6d6,#f6f6f6 70%,#fcfcfc);box-shadow:inset 0 0 0 1px #f0f0f0;"></div>
<svg style="left:604.5px;top:250.2px" width="11.5" height="11.5" viewBox="0 0 11.5 11.5"><path d="M3.3 7 Q4 8.2 4.6 9.2 Q6.2 5.5 8.5 3" fill="none" stroke="#45489e" stroke-width="1.9" stroke-linecap="round"/></svg>
<div style="left:570px;top:243px;width:1px;height:247px;background:#7a7a7a;"></div>
<div style="left:650.5px;top:243px;width:1px;height:247px;background:#7a7a7a;"></div>
<div style="left:662px;top:114.5px;width:166px;height:387px;border:1px solid #dcdcdc;border-radius:3px;box-sizing:border-box;box-shadow:inset 1px 1px 0 #fafafa, 1px 1px 0 #fafafa;"></div>
<div style="left:667.2px;top:112.5px;width:40.3px;height:5px;background:#f0f0f0;"></div>
<div style="left:669.2px;top:107.89px;font-size:11px;line-height:11px;font-weight:400;color:#3a3a3a;white-space:nowrap;transform:scaleX(0.9279);transform-origin:left 0;">Preview</div>
<div style="left:671.20px;width:150px;text-align:center;top:124.89px;font-size:16.2px;line-height:16.2px;font-weight:400;color:#141414;white-space:nowrap;-webkit-text-stroke:0.75px #141414;transform:scaleX(1.1618);transform-origin:center 0;">Pattern No.</div>
<div style="left:674px;top:147.3px;width:28.6px;height:27px;border:1px solid #858585;border-radius:3px;background:linear-gradient(#f3f3f3 0%,#ececec 42%,#dedede 48%,#d4d4d4 100%);box-sizing:border-box;box-shadow:inset 0 0 0 1px rgba(255,255,255,0.6);"></div>
<div style="left:674.00px;width:28.6px;text-align:center;top:156.11px;font-size:11px;line-height:11px;font-weight:400;color:#1e1e1e;white-space:nowrap;transform:scaleX(0.9650);transform-origin:center 0;"></div>
<svg style="left:670px;top:144px" width="40" height="34" viewBox="670 144 40 34"><path d="M690.8 159.2 L684 162.5 L690.8 165.8" fill="none" stroke="#1a1a1a" stroke-width="1.25"/></svg>
<div style="left:711px;top:148.5px;width:62px;height:26px;background:#fff;border-top:1px solid #d0d0d0;border-left:1px solid #d0d0d0;box-sizing:border-box;"></div>
<div style="left:711.20px;width:60px;text-align:center;top:155.40px;font-size:15px;line-height:15px;font-weight:400;color:#141414;white-space:nowrap;-webkit-text-stroke:0.7px #141414;transform:scaleX(1.0789);transform-origin:center 0;">3</div>
<div style="left:781px;top:147.3px;width:27.3px;height:27px;border:1px solid #858585;border-radius:3px;background:linear-gradient(#f3f3f3 0%,#ececec 42%,#dedede 48%,#d4d4d4 100%);box-sizing:border-box;box-shadow:inset 0 0 0 1px rgba(255,255,255,0.6);"></div>
<div style="left:781.00px;width:27.3px;text-align:center;top:156.11px;font-size:11px;line-height:11px;font-weight:400;color:#1e1e1e;white-space:nowrap;transform:scaleX(0.9650);transform-origin:center 0;"></div>
<svg style="left:776px;top:144px" width="40" height="34" viewBox="776 144 40 34"><path d="M790.2 159.2 L797 162.5 L790.2 165.8" fill="none" stroke="#1a1a1a" stroke-width="1.25"/></svg>
<div style="left:699px;top:183.2px;width:87px;height:34.5px;background:#314e9e;border:1px solid #56657f;box-sizing:border-box;"></div>
<div style="left:699px;top:222.04999999999998px;width:87px;height:34.5px;background:#314e9e;border:1px solid #56657f;box-sizing:border-box;"></div>
<div style="left:699px;top:260.9px;width:87px;height:34.5px;background:#314e9e;border:1px solid #56657f;box-sizing:border-box;"></div>
<div style="left:699px;top:299.75px;width:87px;height:34.5px;background:#314e9e;border:1px solid #56657f;box-sizing:border-box;"></div>
<div style="left:699px;top:338.6px;width:87px;height:34.5px;background:#314e9e;border:1px solid #56657f;box-sizing:border-box;"></div>
<svg style="left:698px;top:380px" width="36" height="40" viewBox="698 380 36 40"><path d="M706.6 394.6 H715 L722.3 386.2 L723.5 386.6 V412 L722.3 413.8 L715 405.6 H706.6 Z" fill="#e8e020"/><path d="M707.3 395.2 H715.4 L722.8 386.8 Q724.4 386.4 724.4 388 V412.2 Q724.4 413.8 722.8 413.2 L715.4 406.2 H707.3 Z" fill="#0a0a0a"/></svg>
<div style="left:747.30px;width:80px;text-align:center;top:381.19px;font-size:11px;line-height:11px;font-weight:400;color:#1e1e1e;white-space:nowrap;transform:scaleX(0.9698);transform-origin:center 0;">Buzzer No</div>
<div style="left:774px;top:394.5px;width:28px;height:24.5px;background:#fff;border:1px solid #6a6a6a;box-sizing:border-box;"></div>
<div style="left:774.00px;width:28px;text-align:center;top:401.69px;font-size:11px;line-height:11px;font-weight:400;color:#1e1e1e;white-space:nowrap;transform:scaleX(0.9650);transform-origin:center 0;">0</div>
<div style="left:667.5px;top:425px;width:75px;height:20.5px;border:1px solid #858585;border-radius:3px;background:linear-gradient(#f3f3f3 0%,#ececec 42%,#dedede 48%,#d4d4d4 100%);box-sizing:border-box;box-shadow:inset 0 0 0 1px rgba(255,255,255,0.6);"></div>
<div style="left:667.50px;width:75px;text-align:center;top:430.56px;font-size:11px;line-height:11px;font-weight:400;color:#1e1e1e;white-space:nowrap;transform:scaleX(0.9650);transform-origin:center 0;">Playback</div>
<div style="left:748px;top:425px;width:75.5px;height:20.5px;border:1px solid #adb2b5;border-radius:3px;background:#f4f4f4;box-sizing:border-box;"></div>
<div style="left:748.00px;width:75.5px;text-align:center;top:430.56px;font-size:11px;line-height:11px;font-weight:400;color:#9a9a9a;white-space:nowrap;transform:scaleX(0.9650);transform-origin:center 0;">Skip</div>
<div style="left:667.5px;top:451.5px;width:75px;height:20.5px;border:1px solid #adb2b5;border-radius:3px;background:#f4f4f4;box-sizing:border-box;"></div>
<div style="left:667.50px;width:75px;text-align:center;top:457.06px;font-size:11px;line-height:11px;font-weight:400;color:#9a9a9a;white-space:nowrap;transform:scaleX(0.9650);transform-origin:center 0;">Stop</div>
<div style="left:748px;top:451.5px;width:75.5px;height:20.5px;border:1px solid #adb2b5;border-radius:3px;background:#f4f4f4;box-sizing:border-box;"></div>
<div style="left:748.00px;width:75.5px;text-align:center;top:457.06px;font-size:11px;line-height:11px;font-weight:400;color:#9a9a9a;white-space:nowrap;transform:scaleX(0.9650);transform-origin:center 0;">Pause</div>
<div style="left:667.5px;top:478px;width:75px;height:20.5px;border:1px solid #adb2b5;border-radius:3px;background:#f4f4f4;box-sizing:border-box;"></div>
<div style="left:667.50px;width:75px;text-align:center;top:483.56px;font-size:11px;line-height:11px;font-weight:400;color:#9a9a9a;white-space:nowrap;transform:scaleX(0.9650);transform-origin:center 0;">Clear Input</div>
<div style="left:748px;top:478px;width:75.5px;height:20.5px;border:1px solid #adb2b5;border-radius:3px;background:#f4f4f4;box-sizing:border-box;"></div>
<div style="left:748.00px;width:75.5px;text-align:center;top:483.56px;font-size:11px;line-height:11px;font-weight:400;color:#9a9a9a;white-space:nowrap;transform:scaleX(0.9650);transform-origin:center 0;">Stop Input</div>
<div style="left:662px;top:510.5px;width:166px;height:33.5px;border:1px solid #dcdcdc;border-radius:3px;box-sizing:border-box;box-shadow:inset 1px 1px 0 #fafafa, 1px 1px 0 #fafafa;"></div>
<div style="left:667.1px;top:508.5px;width:77.1px;height:5px;background:#f0f0f0;"></div>
<div style="left:669.1px;top:505.89px;font-size:11px;line-height:11px;font-weight:400;color:#1e1e1e;white-space:nowrap;transform:scaleX(0.9565);transform-origin:left 0;">Preview Setting</div>
<div style="left:667.3px;top:526.29px;font-size:11px;line-height:11px;font-weight:400;color:#1e1e1e;white-space:nowrap;transform:scaleX(0.9703);transform-origin:left 0;">Interval</div>
<div style="left:718px;top:520.5px;width:109px;height:20.5px;border:1px solid #858585;border-radius:3px;background:linear-gradient(#f3f3f3 0%,#ececec 42%,#dedede 48%,#d4d4d4 100%);box-sizing:border-box;box-shadow:inset 0 0 0 1px rgba(255,255,255,0.6);"></div>
<div style="left:722px;top:526.06px;font-size:11px;line-height:11px;font-weight:400;color:#1e1e1e;white-space:nowrap;transform:scaleX(0.9650);transform-origin:left 0;">Follow The Setting</div>
<div style="left:816px;top:529.75px;width:0;height:0;border-left:3.5px solid transparent;border-right:3.5px solid transparent;border-top:4px solid #000;"></div>
<div style="left:5.2px;top:579.19px;font-size:11px;line-height:11px;font-weight:400;color:#1e1e1e;white-space:nowrap;transform:scaleX(1.0299);transform-origin:left 0;">Model:</div>
<div style="left:43px;top:573.5px;width:63.5px;height:17.5px;border-top:1.2px solid #b4b4b4;border-left:1.2px solid #b4b4b4;border-right:1px solid #fafafa;border-bottom:1px solid #fafafa;box-sizing:border-box;background:#efefef;"></div>
<div style="left:47.2px;top:582.6px;width:3px;height:1.5px;background:#5a5a5a;"></div>
<div style="left:51.5px;top:582.6px;width:3px;height:1.5px;background:#5a5a5a;"></div>
<div style="left:55.800000000000004px;top:582.6px;width:3px;height:1.5px;background:#5a5a5a;"></div>
<div style="left:117px;top:579.19px;font-size:11px;line-height:11px;font-weight:400;color:#1e1e1e;white-space:nowrap;transform:scaleX(0.9812);transform-origin:left 0;">Version:</div>
<div style="left:160.3px;top:573.5px;width:63.5px;height:17.5px;border-top:1.2px solid #b4b4b4;border-left:1.2px solid #b4b4b4;border-right:1px solid #fafafa;border-bottom:1px solid #fafafa;box-sizing:border-box;background:#efefef;"></div>
<div style="left:164.5px;top:582.6px;width:3px;height:1.5px;background:#5a5a5a;"></div>
<div style="left:168.8px;top:582.6px;width:3px;height:1.5px;background:#5a5a5a;"></div>
<div style="left:173.1px;top:582.6px;width:3px;height:1.5px;background:#5a5a5a;"></div>
<svg style="left:245px;top:555px" width="14" height="58" viewBox="0 0 14 58"><defs><linearGradient id="tw" x1="0" x2="1"><stop offset="0" stop-color="#505050"/><stop offset="0.5" stop-color="#9a9a9a"/><stop offset="1" stop-color="#404040"/></linearGradient><linearGradient id="tb" x1="0" x2="1"><stop offset="0" stop-color="#9a9a9a"/><stop offset="0.45" stop-color="#f0f0f0"/><stop offset="1" stop-color="#8a8a8a"/></linearGradient></defs><rect x="1" y="1" width="11.5" height="38" rx="2" fill="#4a4a4a"/><rect x="2" y="5.5" width="9.5" height="5.5" rx="1.5" fill="#d62a1c"/><rect x="2" y="12.2" width="9.5" height="5.8" rx="1.5" fill="#e8782a"/><rect x="2" y="19.4" width="9.5" height="5.6" rx="1.5" fill="#3e9e3e"/><rect x="2" y="26" width="9.5" height="6" rx="1.5" fill="#2a4eb8"/><rect x="1" y="32.5" width="11.5" height="1" fill="#555"/><rect x="2" y="33.5" width="9.5" height="5" rx="1" fill="#ececec"/><rect x="1" y="38.5" width="11.5" height="3" fill="#3c3c3c"/><rect x="1" y="41.5" width="11.5" height="11" fill="url(#tb)"/><rect x="1" y="52.5" width="11.5" height="2" fill="#3c3c3c"/><rect x="1" y="55.5" width="11.5" height="1.5" fill="#3c3c3c"/></svg>
<div style="left:276px;top:561px;width:132px;height:42px;border:1px solid #dcdcdc;border-radius:3px;box-sizing:border-box;box-shadow:inset 1px 1px 0 #fafafa, 1px 1px 0 #fafafa;"></div>
<div style="left:281px;top:557px;width:108px;height:8px;background:#f0f0f0;"></div>
<div style="left:283.8px;top:554.69px;font-size:11px;line-height:11px;font-weight:400;color:#111;white-space:nowrap;-webkit-text-stroke:0.55px #111;transform:scaleX(1.0148);transform-origin:left 0;">Data Transfer Speed</div>
<div style="left:281px;top:571.6px;width:10.5px;height:10.5px;border-radius:50%;border:1px solid #a4a4a4;box-sizing:border-box;background:radial-gradient(circle at 55% 60%, #fcfcfc, #d8d8d8 90%);"></div>
<div style="left:283.4px;top:574.0px;width:5.7px;height:5.7px;border-radius:50%;background:radial-gradient(circle at 45% 40%, #9fd4f4 0%, #3a86c4 35%, #123e78 85%);"></div>
<div style="left:297.6px;top:571.09px;font-size:11px;line-height:11px;font-weight:400;color:#111;white-space:nowrap;-webkit-text-stroke:0.55px #111;transform:scaleX(1.0080);transform-origin:left 0;">Standard</div>
<div style="left:281px;top:588.6px;width:10.5px;height:10.5px;border-radius:50%;border:1px solid #a4a4a4;box-sizing:border-box;background:radial-gradient(circle at 55% 60%, #fcfcfc, #d8d8d8 90%);"></div>
<div style="left:297.6px;top:587.99px;font-size:11px;line-height:11px;font-weight:400;color:#111;white-space:nowrap;-webkit-text-stroke:0.55px #111;transform:scaleX(0.9838);transform-origin:left 0;">Slow(For slow PCs)</div>
<div style="left:422px;top:558.5px;width:121px;height:21.5px;border:1px solid #adb2b5;border-radius:3px;background:#f4f4f4;box-sizing:border-box;"></div>
<div style="left:422.00px;width:121px;text-align:center;top:564.56px;font-size:11px;line-height:11px;font-weight:400;color:#9a9a9a;white-space:nowrap;transform:scaleX(1.0172);transform-origin:center 0;">Send to product</div>
<div style="left:421.5px;top:587px;width:120.5px;height:20.5px;border:1px solid #adb2b5;border-radius:3px;background:#f4f4f4;box-sizing:border-box;"></div>
<div style="left:421.50px;width:120.5px;text-align:center;top:592.56px;font-size:11px;line-height:11px;font-weight:400;color:#9a9a9a;white-space:nowrap;transform:scaleX(1.0044);transform-origin:center 0;">Receive from product</div>
</body></html>
